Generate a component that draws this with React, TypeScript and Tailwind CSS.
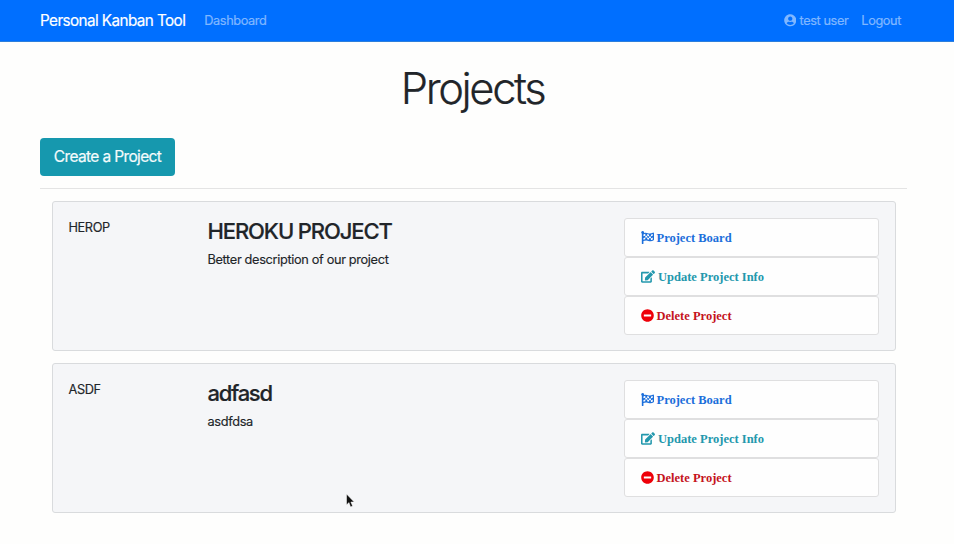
import { FaEdit, FaFlagCheckered, FaMinusCircle, FaUserCircle } from "react-icons/fa";

type Project = { id: string; name: string; description: string; nameClass: string };

const projects: Project[] = [
  {
    id: "HEROP",
    name: "HEROKU PROJECT",
    description: "Better description of our project",
    nameClass: "tracking-[-1.1px]",
  },
  {
    id: "ASDF",
    name: "adfasd",
    description: "asdfdsa",
    nameClass: "tracking-[-1.3px]",
  },
];

function ProjectCard({ project }: { project: Project }) {
  const row = "flex h-[39px] items-center rounded-[3px] border border-[#dfdfe0] bg-[#fefefe] pl-4";
  return (
    <article className="flex h-[150px] rounded-[3px] border border-[#d9dbdd] bg-[#f5f6f8] pt-4 pl-[15.5px]">
      <div className="w-[139px] shrink-0 text-[12.75px] leading-[19.5px] tracking-[-0.4px] [-webkit-text-stroke:0.15px]">
        {project.id}
      </div>
      <div className="w-[416px] shrink-0">
        <h3 className={`text-[22px] leading-[27px] font-medium whitespace-nowrap [-webkit-text-stroke:0.2px] ${project.nameClass}`}>{project.name}</h3>
        <p className="mt-[5px] text-[12.75px] leading-[20px] tracking-[-0.34px] whitespace-nowrap [-webkit-text-stroke:0.15px]">{project.description}</p>
      </div>
      <ul className="w-[255px] shrink-0 font-['Liberation_Serif',serif] text-[12.5px] leading-[20px] font-bold">
        <li className={`${row} text-[#1c6fdb]`}>
          <FaFlagCheckered className="mr-[3px] size-[13px]" />
          Project Board
        </li>
        <li className={`${row} text-[#2398ad]`}>
          <FaEdit className="mr-[3.5px] h-[13px] w-[14px]" />
          Update Project Info
        </li>
        <li className={`${row} text-[#c5131c]`}>
          <FaMinusCircle className="mr-[3px] size-[13px] text-[#ee0009]" />
          Delete Project
        </li>
      </ul>
    </article>
  );
}

export default function App() {
  return (
    <div className="relative h-[544px] w-[954px] overflow-hidden bg-[#fefefd] font-['Inter',sans-serif] text-[#212529]">
      <nav className="flex h-[42px] items-center border-b border-[#2d7fdc] bg-[#006fff] pr-[53px] pl-10 text-[12.75px] tracking-[-0.4px] text-[#80b7ff] [-webkit-text-stroke:0.2px]">
        <span className="pt-px text-[15.25px] tracking-[-0.58px] text-white">Personal Kanban Tool</span>
        <span className="ml-[19px]">Dashboard</span>
        <span className="ml-auto flex items-center gap-[3px]">
          <FaUserCircle className="size-[12.5px]" />
          test user
        </span>
        <span className="ml-[13px]">Logout</span>
      </nav>
      <main className="pr-[47px] pl-10">
        <h1 className="mt-[20px] pr-[2px] text-center text-[43.5px] leading-[52px] font-light tracking-[-2.4px] [-webkit-text-stroke:0.2px]">Projects</h1>
        <button className="mt-[24px] block h-[37.5px] w-[135px] rounded-[4px] bg-[#1698ae] text-[15.5px] tracking-[-0.64px] whitespace-nowrap text-[#f4fbfc] [-webkit-text-stroke:0.2px]">
          Create a Project
        </button>
        <hr className="mt-[12.5px] border-[#e4e4e4]" />
        <section className="mt-3 flex flex-col gap-3 pr-[11px] pl-3">
          {projects.map((project) => (
            <ProjectCard key={project.id} project={project} />
          ))}
        </section>
      </main>
      <svg className="absolute top-[493px] left-[345px] h-[15px] w-[10px]" viewBox="0 0 10 15">
        <path d="M1.5 1v11l2.4-2.4L5.6 14l2-1-1.7-4h3.3z" fill="#111" stroke="#fff" strokeWidth=".5" />
      </svg>
    </div>
  );
}
